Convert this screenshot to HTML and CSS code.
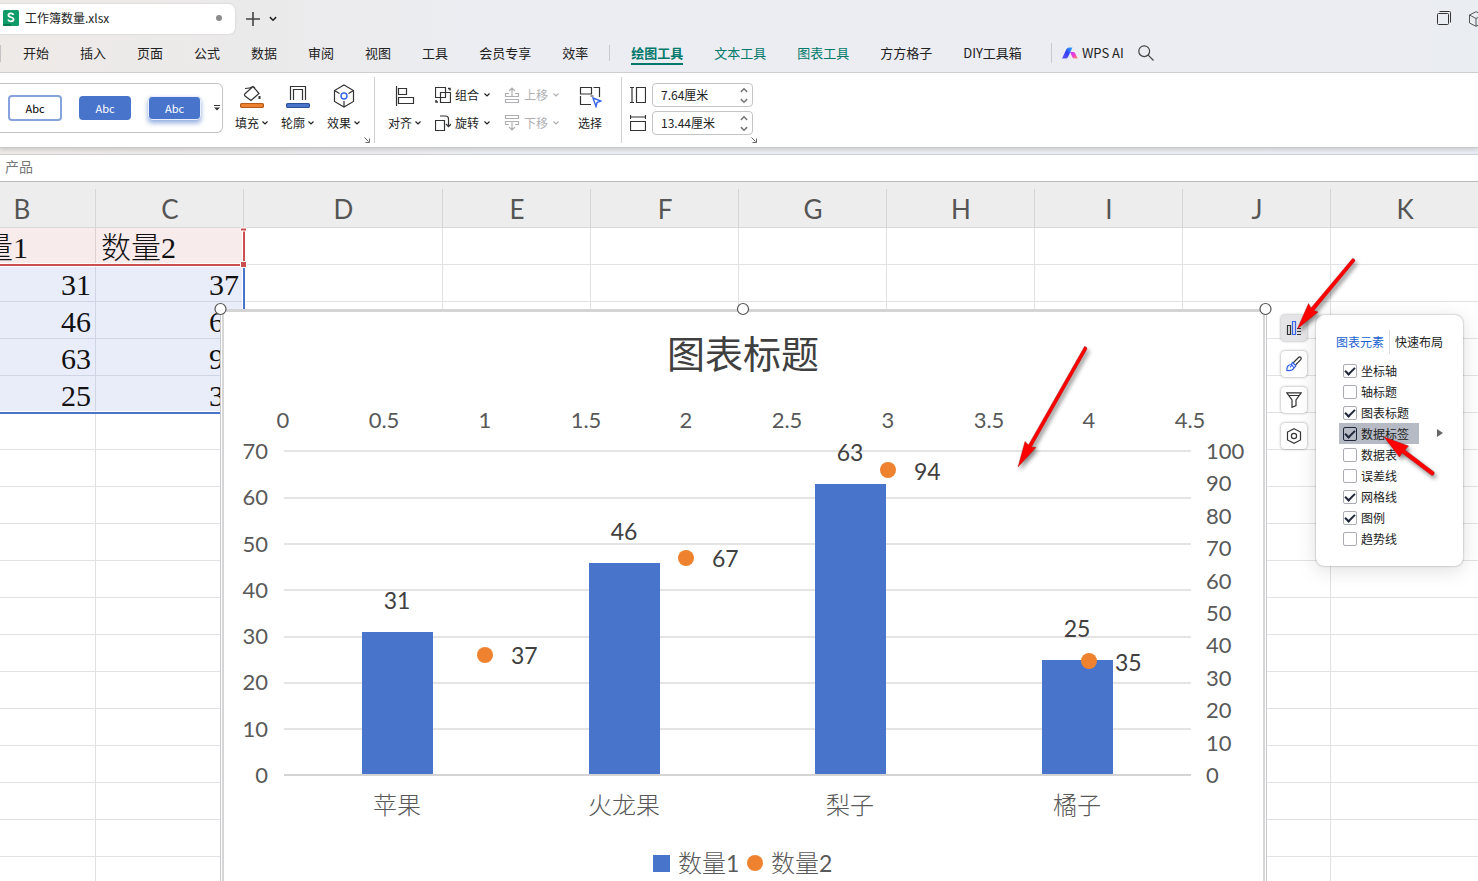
FILE: index.html
```html
<!DOCTYPE html>
<html lang="zh-CN">
<head>
<meta charset="utf-8">
<title>工作簿数量.xlsx</title>
<link rel="stylesheet" href="styles.css">
</head>
<body>
<svg class="defs" width="0" height="0" aria-hidden="true">
  <symbol id="caret" viewBox="0 0 8 8"><path d="M1.500 2.500 4 5l2.500-2.500" fill="none" stroke="currentColor" stroke-width="1.200"/></symbol>
  <symbol id="launcher" viewBox="0 0 6 6"><path d="M.5.5 4.500 4.500M1.500 5.500h4v-4" fill="none" stroke="currentColor"/></symbol>
</svg>

<header class="titlebar">
  <div class="doc-tab">
    <svg width="16" height="16" viewBox="0 0 16 16"><rect width="16" height="16" rx="1.500" fill="#109c68"/><path d="M0 14h8v2H1.500A1.500 1.500 0 0 1 0 14.500z" fill="#0a7a4f"/><path d="M10.600 5C10.100 3.900 9 3.400 7.900 3.400 6.400 3.400 5.400 4.200 5.400 5.300c0 2.600 5.200 1.300 5.200 4 0 1.200-1.100 2-2.700 2-1.400 0-2.500-.6-2.900-1.800" fill="none" stroke="#fff" stroke-width="1.700"/></svg>
    <span class="doc-name">工作簿数量.xlsx</span>
    <i class="dirty-dot"></i>
  </div>
  <button class="bare" aria-label="新建"><svg width="14" height="14" viewBox="0 0 14 14"><path d="M7 0v14M0 7h14" stroke="#444" stroke-width="1.600"/></svg></button>
  <button class="bare" aria-label="更多"><svg width="10" height="10"><use href="#caret"/></svg></button>
  <div class="window-tools">
    <button class="bare" aria-label="窗口"><svg width="16" height="16" viewBox="0 0 16 16" fill="none" stroke="#333"><rect x="1.500" y="2.500" width="11" height="11" rx="1"/><path d="M3.500.5h10a1 1 0 0 1 1 1v10"/></svg></button>
    <button class="bare" aria-label="应用"><svg width="16" height="16" viewBox="0 0 16 16" fill="none" stroke="#555"><path d="M8 .7 14.500 4v8L8 15.300 1.500 12V4zM1.500 4 8 7.500 14.500 4M8 7.500v7.800"/></svg></button>
  </div>
</header>

<nav class="menu">
  <i class="edge-rule"></i>
  <a href="#">开始</a><a href="#">插入</a><a href="#">页面</a><a href="#">公式</a><a href="#">数据</a><a href="#">审阅</a><a href="#">视图</a><a href="#">工具</a><a href="#">会员专享</a><a href="#">效率</a>
  <i class="menu-rule"></i>
  <a href="#" class="tool active">绘图工具</a><a href="#" class="tool">文本工具</a><a href="#" class="tool">图表工具</a><a href="#">方方格子</a><a href="#">DIY工具箱</a>
  <i class="menu-rule ai-rule"></i>
  <a href="#" class="ai"><svg width="16" height="12" viewBox="0 0 16 12"><defs><linearGradient id="aiL" x1="0" y1="1" x2="1" y2="0"><stop stop-color="#6a5cff"/><stop offset=".5" stop-color="#3340f0"/><stop offset="1" stop-color="#25b4ff"/></linearGradient><linearGradient id="aiR" x1="0" y1="0" x2="1" y2="1"><stop stop-color="#c03cff"/><stop offset=".5" stop-color="#f03fd0"/><stop offset="1" stop-color="#ff9a5c"/></linearGradient></defs><path d="M0 11.500 4.500 2Q5.300.5 7 .5h3.500L6 10q-.8 1.500-2.500 1.500z" fill="url(#aiL)"/><path d="M8 5h3.500q1 0 1.500 1l2.800 5.500H12.500q-1.500 0-2-1z" fill="url(#aiR)"/></svg>WPS AI</a>
  <button class="bare" aria-label="搜索"><svg width="16" height="16" viewBox="0 0 16 16" fill="none" stroke="#444" stroke-width="1.200"><circle cx="6.200" cy="6.200" r="5.400"/><path d="m10.200 10.200 5.300 5.300"/></svg></button>
</nav>

<section class="ribbon">
  <div class="gallery">
    <button class="style outline">Abc</button>
    <button class="style solid">Abc</button>
    <button class="style solid raised">Abc</button>
    <button class="bare more" aria-label="更多样式"><svg width="8" height="6" viewBox="0 0 8 6"><path d="M1 .5h6" stroke="#333"/><path d="M1 2.500h6L4 5.500z" fill="#333"/></svg></button>
  </div>
  <div class="group paints">
    <button class="tall"><svg width="24" height="24" viewBox="0 0 24 24" fill="none" stroke="#333" stroke-width="1.200"><path d="m4.700 10 8.300-7.500 6 7L11 16.500 5 12q-.8-1-.3-2zM5 4.500q5 0 8-2l2 1.500"/><path d="M19.500 12v3" stroke-width="2"/><rect x=".5" y="19.500" width="23" height="4" rx="1.500" fill="#ed8130" stroke="#b55b18"/></svg><span>填充<svg class="caret"><use href="#caret"/></svg></span></button>
    <button class="tall"><svg width="24" height="24" viewBox="0 0 24 24" fill="none" stroke="#333" stroke-width="1.200"><path d="M4.500 16V2.500h15V16M7.500 16V5.500h9V16"/><rect x=".5" y="19.500" width="23" height="4" rx="1.500" fill="#4874cb" stroke="#2c4f96"/></svg><span>轮廓<svg class="caret"><use href="#caret"/></svg></span></button>
    <button class="tall"><svg width="24" height="24" viewBox="0 0 24 24" fill="none" stroke="#333" stroke-width="1.200"><path d="m12 1 9.500 5.500v11L12 23l-9.500-5.500v-11zM2.500 6.500l5 3M21.500 6.500l-5 3M12 17v6"/><circle cx="12" cy="12" r="3" stroke="#3563e9" stroke-width="1.400"/></svg><span>效果<svg class="caret"><use href="#caret"/></svg></span></button>
    <button class="bare launcher" aria-label="形状样式设置"><svg width="6" height="6"><use href="#launcher"/></svg></button>
  </div>
  <div class="group arrange">
    <button class="tall"><svg width="24" height="24" viewBox="0 0 24 24" fill="none" stroke="#333" stroke-width="1.200"><path d="M3.500 2v20M5.500 4.500h8v6h-8zM5.500 13.500h15v6h-15z"/></svg><span>对齐<svg class="caret"><use href="#caret"/></svg></span></button>
    <div class="pair">
      <button class="wide"><svg width="16" height="16" viewBox="0 0 16 16" fill="none" stroke="#333" stroke-width="1.200"><path d="M.5.500h10v10H.5zM5.500 5.500h10v10h-10z"/><path d="M13 1.500h2v2M1 13v2h2" stroke-width="1.500"/></svg>组合<svg class="caret"><use href="#caret"/></svg></button>
      <button class="wide"><svg width="16" height="16" viewBox="0 0 16 16" fill="none" stroke="#333" stroke-width="1.200"><path d="M.5 5.500h9v10h-9zM5 1h5.500q3 0 3 3v7.500M11 9l2.500 2.700L16 9"/></svg>旋转<svg class="caret"><use href="#caret"/></svg></button>
    </div>
    <div class="pair">
      <button class="wide" disabled><svg width="16" height="16" viewBox="0 0 16 16" fill="none" stroke="currentColor" stroke-width="1.200"><path d="M8 9V1M5 4l3-3 3 3M5 6.500H1.500v3h13v-3H11M1.500 12.500h13v3h-13z"/></svg>上移<svg class="caret"><use href="#caret"/></svg></button>
      <button class="wide" disabled><svg width="16" height="16" viewBox="0 0 16 16" fill="none" stroke="currentColor" stroke-width="1.200"><path d="M8 7v8M5 12l3 3 3-3M5 9.500H1.500v-3h13v3H11M1.500.5h13v3h-13z"/></svg>下移<svg class="caret"><use href="#caret"/></svg></button>
    </div>
    <button class="tall select"><svg width="24" height="24" viewBox="0 0 24 24" fill="none" stroke="#333" stroke-width="1.200"><path d="M2.500 10V3.500h11V10zM15.500 3.500h6V13M2.500 12v8.500H13M12.500 12h3"/><path d="m15 14 8 3-4 1.500-1 4z" stroke="#3563e9" stroke-width="1.400"/></svg><span>选择</span></button>
  </div>
  <div class="group sizes">
    <div class="size">
      <label for="h" aria-label="高度"><svg width="16" height="18" viewBox="0 0 16 18" fill="none" stroke="#333" stroke-width="1.200"><path d="M0 1.500h4M0 16.500h4M2 1.500v15M6.500 1.500h9v15h-9z"/></svg></label>
      <div class="spin"><input id="h" type="text" value="7.64厘米"><span class="steps"><button aria-label="增加"><svg class="caret up"><use href="#caret"/></svg></button><button aria-label="减少"><svg class="caret"><use href="#caret"/></svg></button></span></div>
    </div>
    <div class="size">
      <label for="w" aria-label="宽度"><svg width="16" height="18" viewBox="0 0 16 18" fill="none" stroke="#333" stroke-width="1.200"><path d="M.5 1v4M15.500 1v4M.5 3h15M.5 7.500h15v9H.5z"/></svg></label>
      <div class="spin"><input id="w" type="text" value="13.44厘米"><span class="steps"><button aria-label="增加"><svg class="caret up"><use href="#caret"/></svg></button><button aria-label="减少"><svg class="caret"><use href="#caret"/></svg></button></span></div>
    </div>
    <button class="bare launcher" aria-label="大小设置"><svg width="6" height="6"><use href="#launcher"/></svg></button>
  </div>
</section>

<div class="formula">产品</div>

<main class="sheet">
  <table class="cells">
    <colgroup><col class="std"><col class="std"><col class="broad"><col class="std"><col class="std"><col class="std"><col class="std"><col class="std"><col class="std"><col></colgroup>
    <thead><tr><th>B<th>C<th>D<th>E<th>F<th>G<th>H<th>I<th>J<th>K</tr></thead>
    <tbody>
      <tr><td class="name">数量1<td class="name">数量2<td><td><td><td><td><td><td><td></tr>
      <tr><td class="num">31<td class="num">37<td><td><td><td><td><td><td><td></tr>
      <tr><td class="num">46<td class="num">67<td><td><td><td><td><td><td><td></tr>
      <tr><td class="num">63<td class="num">94<td><td><td><td><td><td><td><td></tr>
      <tr><td class="num">25<td class="num">35<td><td><td><td><td><td><td><td></tr>
      <tr><td><td><td><td><td><td><td><td><td><td></tr>
      <tr><td><td><td><td><td><td><td><td><td><td></tr>
      <tr><td><td><td><td><td><td><td><td><td><td></tr>
      <tr><td><td><td><td><td><td><td><td><td><td></tr>
      <tr><td><td><td><td><td><td><td><td><td><td></tr>
      <tr><td><td><td><td><td><td><td><td><td><td></tr>
      <tr><td><td><td><td><td><td><td><td><td><td></tr>
      <tr><td><td><td><td><td><td><td><td><td><td></tr>
      <tr><td><td><td><td><td><td><td><td><td><td></tr>
      <tr><td><td><td><td><td><td><td><td><td><td></tr>
      <tr><td><td><td><td><td><td><td><td><td><td></tr>
      <tr><td><td><td><td><td><td><td><td><td><td></tr>
      <tr><td><td><td><td><td><td><td><td><td><td></tr>
    </tbody>
  </table>

  <svg class="ranges" width="250" height="240" viewBox="0 182 250 240">
    <path d="M0 263.500h242M0 266.500h242M242.500 230v33M245.500 230v33M242.500 268v144M245.500 268v144M0 411.500h243" stroke="#fff"/>
    <path d="M244 268v145H0" fill="none" stroke="#4874cb" stroke-width="2"/>
    <path d="M0 265h244V229" fill="none" stroke="#c9504e" stroke-width="2"/>
    <path d="M240.500 228h6v3h-6zM240.500 261.500h6v6h-6z" fill="#c9504e" stroke="#fff"/>
  </svg>

  <svg class="chart" width="1064" height="600" viewBox="211 301 1064 600" role="img" aria-label="图表标题">
    <path d="M220 309h1047v592H220z" fill="#fff"/>
    <path d="M220.500 901V309M1266.500 901V309" stroke="#c9cace"/>
    <path d="M223 901V310M1264 901V310" stroke="#d6d6d6" stroke-width="2"/>
    <path d="M220 310.500h1047" stroke="#d4d4d4" stroke-width="3"/>
    <g fill="#fff" stroke="#555" stroke-width="1.200"><circle cx="220.500" cy="309" r="5.500"/><circle cx="743" cy="309" r="5.500"/><circle cx="1265.500" cy="309" r="5.500"/></g>
    <text class="chart-title" x="743" y="368">图表标题</text>
    <path d="M284 451h907M284 498h907M284 544h907M284 590h907M284 637h907M284 683h907M284 729h907" stroke="#e4e4e4" stroke-width="2"/>
    <path d="M284 775h907" stroke="#d4d4d4" stroke-width="2"/>
    <g fill="#4874cb"><path d="M362 632h71v142h-71zM589 563h71v211h-71zM815 484h71v290h-71zM1042 660h71v114h-71z"/><rect x="653" y="855" width="17" height="17"/></g>
    <g fill="#ee822f"><circle cx="485" cy="655" r="8"/><circle cx="686" cy="558" r="8"/><circle cx="888" cy="470" r="8"/><circle cx="1089" cy="661" r="8"/><circle cx="755" cy="863" r="8"/></g>
    <g class="axis mid"><text x="283" y="428">0</text><text x="384" y="428">0.5</text><text x="485" y="428">1</text><text x="586" y="428">1.5</text><text x="686" y="428">2</text><text x="787" y="428">2.5</text><text x="888" y="428">3</text><text x="989" y="428">3.5</text><text x="1089" y="428">4</text><text x="1190" y="428">4.5</text></g>
    <g class="axis end"><text x="268" y="459">70</text><text x="268" y="505">60</text><text x="268" y="552">50</text><text x="268" y="598">40</text><text x="268" y="644">30</text><text x="268" y="690">20</text><text x="268" y="737">10</text><text x="268" y="783">0</text></g>
    <g class="axis"><text x="1206" y="459">100</text><text x="1206" y="491">90</text><text x="1206" y="524">80</text><text x="1206" y="556">70</text><text x="1206" y="589">60</text><text x="1206" y="621">50</text><text x="1206" y="653">40</text><text x="1206" y="686">30</text><text x="1206" y="718">20</text><text x="1206" y="751">10</text><text x="1206" y="783">0</text></g>
    <g class="value mid"><text x="397" y="609">31</text><text x="624" y="540">46</text><text x="850" y="461">63</text><text x="1077" y="637">25</text></g>
    <g class="value"><text x="511" y="664">37</text><text x="712" y="567">67</text><text x="914" y="480">94</text><text x="1115" y="671">35</text></g>
    <g class="cat mid"><text x="397" y="814">苹果</text><text x="624" y="814">火龙果</text><text x="850" y="814">梨子</text><text x="1077" y="814">橘子</text></g>
    <g class="cat"><text x="678" y="872">数量<tspan class="digit">1</tspan></text><text x="771" y="872">数量<tspan class="digit">2</tspan></text></g>
  </svg>

  <div class="chart-tools">
    <button class="on" aria-label="图表元素"><svg width="16" height="16" viewBox="0 0 16 16" fill="none" stroke="#333" stroke-width="1.200"><path d="M1.500 5.500h3v9h-3z"/><path d="M6.500 1.500h3v13h-3z" stroke="#3563e9"/><path d="M11 8.500h4M11 11.500h4M11 14.500h4"/></svg></button>
    <button aria-label="图表样式"><svg width="16" height="16" viewBox="0 0 16 16" fill="none" stroke="#333" stroke-width="1.200"><path d="m7 7 5.500-5.500q1-1 2.200-.2 1 1.200 0 2.400L9.500 9"/><path d="M6.500 6.500 9.800 9.800 8 12Q6 15.500.8 14.500q0-4 2-5.200 1-.8 2.400-.8zM4 11.500l2-2.500 2 3" stroke="#3563e9"/></svg></button>
    <button aria-label="筛选"><svg width="16" height="16" viewBox="0 0 16 16" fill="none" stroke="#333" stroke-width="1.200"><path d="M.8.8h14.400L10 8v5.500L6 15.300V8zM3 3.500h10"/></svg></button>
    <button aria-label="设置"><svg width="16" height="16" viewBox="0 0 16 16" fill="none" stroke="#333" stroke-width="1.200"><path d="M8 .7 14.500 4v8L8 15.300 1.500 12V4z"/><circle cx="8" cy="8" r="2.600"/></svg></button>
  </div>

  <section class="popup">
    <div class="popup-tabs"><button class="current">图表元素</button><i></i><button>快速布局</button></div>
    <div class="checks">
      <label><input type="checkbox" checked>坐标轴</label>
      <label><input type="checkbox">轴标题</label>
      <label><input type="checkbox" checked>图表标题</label>
      <label class="hover"><input type="checkbox" checked>数据标签<i class="sub-arrow"></i></label>
      <label><input type="checkbox">数据表</label>
      <label><input type="checkbox">误差线</label>
      <label><input type="checkbox" checked>网格线</label>
      <label><input type="checkbox" checked>图例</label>
      <label><input type="checkbox">趋势线</label>
    </div>
  </section>

  <svg class="marks" width="440" height="240" viewBox="1010 250 440 240">
    <g fill="#f00" stroke="#a00808" stroke-width=".4" stroke-linejoin="round">
      <path d="M1352.500 258.500q2.500 0 2.500 2.500L1314 310.500l4 1.500L1297.300 329l11.200-25.500 2.500 4.500z"/>
      <path d="M1084.500 346.500q2.500 0 2.500 2.500L1031.500 447l4.500.5L1018 467l7-25.500 3.500 3.500z"/>
      <path d="M1432 475.500q3-.5 2-3.500L1405 450l3.500-4L1384 437l15.500 20 2.500-4z"/>
    </g>
  </svg>
</main>
</body>
</html>
```
FILE: styles.css
```css
* { box-sizing: border-box; }
body {
  margin: 0;
  height: 100vh;
  display: flex;
  flex-direction: column;
  overflow: hidden;
  font: 12px/16px "Noto Sans CJK SC", sans-serif;
  color: #222;
  background: linear-gradient(90deg, #eeeae8 0, #ebeaea 240px, #ecedf2 480px, #ecedf2 85%, #eaedf2 100%);
}
button, input { font: inherit; color: inherit; }
button { border: 0; padding: 0; background: none; display: flex; align-items: center; }
a { color: inherit; text-decoration: none; }
svg { display: block; flex: none; }
.defs { position: absolute; }
.caret { width: 8px; height: 8px; }

.titlebar { display: flex; align-items: center; height: 38px; flex: none; }
.titlebar > .bare { margin-left: 8px; }
.titlebar > .doc-tab + .bare { margin-left: 11px; }
.doc-tab {
  display: flex; align-items: center; gap: 6px;
  width: 235px; height: 30px; padding: 0 13px 2px 3px;
  background: #fff; border-radius: 0 6px 6px 0;
  box-shadow: 0 0 2px #0003;
}
.doc-name { flex: 1; }
.dirty-dot { width: 6px; height: 6px; border-radius: 50%; background: #8b8b8b; }
.window-tools { display: flex; gap: 16px; margin: 0 -6px 0 auto; }

.menu {
  display: flex; align-items: center; gap: 31px;
  height: 35px; flex: none; padding-bottom: 4px;
  font-size: 13px; line-height: 20px; white-space: nowrap;
  border-bottom: 1px solid #cfd0d4;
}
.edge-rule { width: 1px; height: 17px; background: #c4c4c6; margin-right: -9px; }
.menu-rule { width: 1px; height: 16px; background: #c9cacf; margin: 0 -10px; }
.ai-rule { height: 20px; margin: 0 -21px 0 -2px; }
.tool { color: #00796b; }
.active { font-weight: 700; box-shadow: 0 2px 0 #00796b; }
.ai { display: flex; align-items: center; gap: 4px; font-size: 13px; }
.menu .bare { margin-left: -17px; }

.ribbon {
  display: flex; height: 75px; flex: none; white-space: nowrap;
  background: #fff; border-bottom: 1px solid #c9cacd;
  box-shadow: 0 2px 4px #0002;
}
.gallery {
  display: flex; align-items: center; gap: 17px;
  width: 223px; height: 50px; margin-top: 10px; padding-left: 8px;
  border: 1px solid #c4c4c6; border-left: 0; border-radius: 0 6px 6px 0;
}
.style { justify-content: center; height: 26px; width: 54px; border-radius: 4px; font-size: 11px; }
.outline { border: 2px solid #86a3dd; color: #000; }
.solid { width: 52px; height: 24px; background: #4874cb; color: #fff; }
.raised { width: 53px; border: 1px solid #e8eefa; box-shadow: 0 3px 5px #4874cb99; }
.more { margin-left: -5px; }
.group { position: relative; display: flex; align-items: flex-start; padding-top: 11px; }
.arrange::before { content: ""; width: 1px; height: 66px; margin-top: -7px; background: #d0d0d2; }
.tall { flex-direction: column; gap: 7px; }
.tall span { display: flex; align-items: center; gap: 2px; line-height: 16px; }
.paints { gap: 12px; padding-left: 12px; width: 151px; }
.launcher { position: absolute; right: 4px; bottom: 4px; color: #666; }
.arrange { width: 247px; }
.arrange > .tall { margin-left: 13px; }
.pair { display: grid; gap: 12px; padding-top: 3px; margin-left: 13px; }
.wide { gap: 4px; height: 16px; }
.wide:disabled { color: #b0b0b2; }
.arrange > .select { margin-left: 18px; }
.sizes { flex-direction: column; gap: 4px; padding: 10px 0 0 9px; width: 140px; }
.sizes::before { content: ""; position: absolute; left: 0; top: 4px; width: 1px; height: 66px; background: #d0d0d2; }
.size { display: flex; align-items: center; gap: 6px; }
.spin { display: flex; width: 101px; height: 24px; border: 1px solid #c4c4c6; border-radius: 4px; }
.spin input { flex: 1; min-width: 0; border: 0; padding: 0 0 0 8px; background: none; }
.steps { display: flex; flex-direction: column; justify-content: space-around; padding-right: 3px; }
.up { transform: scaleY(-1); }
.steps .caret { width: 10px; height: 10px; color: #777; }

.formula {
  flex: none; height: 28px; margin-top: 6px; padding-left: 5px;
  font-size: 14px; line-height: 22px; color: #777;
  background: #fff; border: solid #cfd0d4; border-width: 1px 0; border-bottom-color: #b8b8ba;
}

.sheet { position: relative; flex: 1; min-height: 0; overflow: hidden; background: #fff; }
.cells {
  width: calc(100% + 53px); margin-left: -52px;
  table-layout: fixed; border-collapse: separate; border-spacing: 0;
}
.std { width: 148px; }
.broad { width: 199px; }
.cells th {
  height: 46px; padding: 8px 0 0;
  font: 26px/36px Lato, sans-serif; color: #555;
  background: linear-gradient(#d5d5d7, #d5d5d7) right 0 top 7px / 1px 100% no-repeat #ededed;
  border-bottom: 1px solid #d9d9db;
}
.cells td {
  height: 37px; padding: 4px 4px 0 5px;
  font: 30px/32px "Liberation Serif", "Noto Sans CJK SC", serif; color: #111;
  border-right: 1px solid #e2e2e4; border-bottom: 1px solid #e2e2e4;
  overflow: hidden; white-space: nowrap;
}
.cells .name { background: #f8ebeb; border-color: #dcd2d4; font-weight: 300; }
.cells .num { background: #e9edfa; border-color: #d0d5e3; text-align: right; }
.ranges { position: absolute; left: 0; top: 0; }

.chart { position: absolute; left: 211px; top: 119px; font-family: Lato, "Noto Sans CJK SC", sans-serif; }
.chart-title { font-size: 38px; fill: #404040; text-anchor: middle; }
.axis { font-size: 22px; fill: #595959; }
.value { font-size: 23px; fill: #404040; }
.cat { font-size: 24px; font-weight: 300; fill: #595959; }
.digit { font-size: 23px; font-weight: 400; }
.mid { text-anchor: middle; }
.end { text-anchor: end; }

.chart-tools { position: absolute; left: 1281px; top: 133px; display: grid; gap: 10px; }
.chart-tools button {
  justify-content: center; width: 26px; height: 26px;
  background: #fff; border-radius: 4px; box-shadow: 0 0 3px #0006;
}
.chart-tools .on { background: #e4e4e6; }
.popup {
  position: absolute; left: 1316px; top: 133px; width: 147px;
  padding: 15px 19px 17px 20px; background: #fff; border-radius: 8px;
  box-shadow: 0 0 2px #0006, 0 4px 20px #0002;
}
.popup-tabs { display: flex; align-items: center; gap: 5px; height: 24px; white-space: nowrap; }
.popup-tabs i { width: 1px; height: 24px; background: #ddd; }
.current { color: #1a5fd0; }
.checks { display: grid; justify-items: start; margin: 6px 0 0 3px; }
.checks label { position: relative; display: flex; align-items: center; gap: 4px; height: 21px; padding: 0 10px 0 4px; white-space: nowrap; }
.checks input {
  appearance: none; display: grid; place-items: center;
  width: 14px; height: 14px; margin: 0; border: 1px solid #a9acb3; border-radius: 2px; background: #fff;
}
.checks input:checked::before {
  content: ""; width: 8px; height: 4px; margin-top: -2px;
  border: solid #20283c; border-width: 0 0 2px 2px; transform: rotate(-45deg);
}
.checks .hover { background: #b5bac5; }
.checks .hover input { background: none; border-color: #20283c; }
.sub-arrow { position: absolute; left: 98px; top: 6px; border: solid transparent; border-width: 4px 0 4px 6px; border-left-color: #666; }
.marks { position: absolute; left: 1010px; top: 68px; pointer-events: none; filter: drop-shadow(2px 3px 2px #0007); }
```
